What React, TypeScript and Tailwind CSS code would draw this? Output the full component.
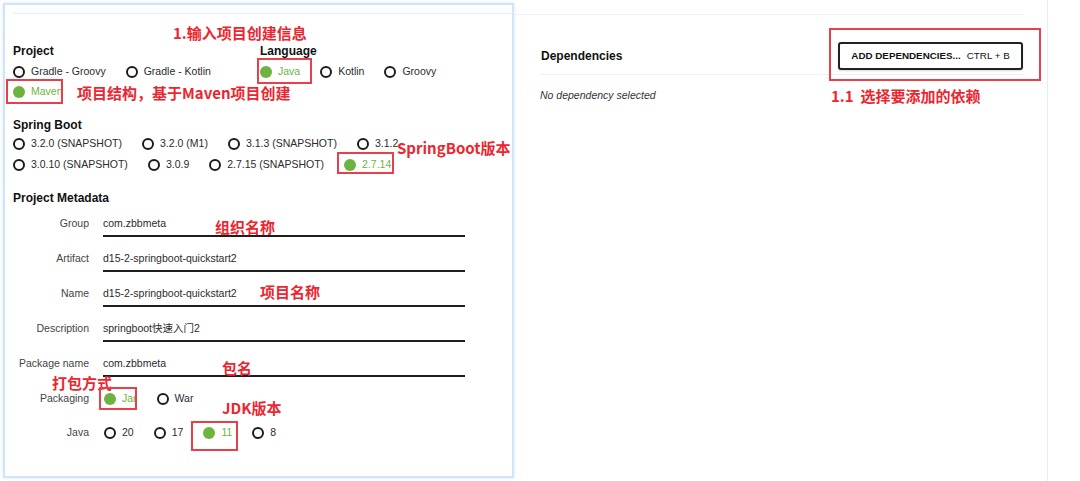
/**
 * Spring Initializr project form, annotated with red notes.
 */

const GREEN = "text-[#6db33f]";

function Radio({ label, checked = false }: { label: string; checked?: boolean }) {
  return (
    <span className="flex items-center gap-[6px]">
      {checked ? (
        <span className="shrink-0 w-[12px] h-[12px] rounded-full bg-[#6db33f]" />
      ) : (
        <span className="shrink-0 w-[12px] h-[12px] rounded-full border-2 border-[#1c1c1c]" />
      )}
      <span className={checked ? GREEN : "text-[#2b2b2b]"}>{label}</span>
    </span>
  );
}

function RadioRow({ items, selected }: { items: string[]; selected?: string }) {
  return (
    <div className="flex items-center gap-5 h-[20px]">
      {items.map((it) => (
        <Radio key={it} label={it} checked={it === selected} />
      ))}
    </div>
  );
}

function Field({ label, value }: { label: string; value: string }) {
  return (
    <div className="flex h-[35px]">
      <div className="w-[76px] text-right pt-[5px] leading-[16px] text-[#444]">{label}</div>
      <div className="ml-[14px] w-[362px] h-[27px] pt-[5px] leading-[16px] border-b-2 border-[#1e1e1e] text-[#2b2b2b]">
        {value}
      </div>
    </div>
  );
}

function Note({ text, className }: { text: string; className: string }) {
  return (
    <span
      className={`absolute leading-[20px] text-[15px] font-bold text-[#ec2630] whitespace-pre font-['Noto_Sans_CJK_SC',sans-serif] ${className}`}
    >
      {text}
    </span>
  );
}

function Box({ className }: { className: string }) {
  return <span className={`absolute border-2 border-[#e8404a] ${className}`} />;
}

export default function App() {
  return (
    <div className="relative w-[1080px] h-[481px] bg-white overflow-hidden flex text-[10.5px] font-['Liberation_Sans','Noto_Sans_CJK_SC',Arial,sans-serif]">
      {/* Left form panel */}
      <div className="ml-[3px] mt-[3px] w-[511px] h-[475px] border-2 border-[#d2e4f8] shadow-[0_0_3px_#d6e7fa] px-2 shrink-0">
        <div className="mt-[8px] -mr-2 h-px bg-[#eceff2]" />

        <div className="flex mt-[29px]">
          <div className="w-[247px]">
            <div className="h-[16px] leading-[16px] text-[12px] font-bold text-[#111]">Project</div>
            <div className="mt-[3px]">
              <RadioRow items={["Gradle - Groovy", "Gradle - Kotlin"]} />
              <RadioRow items={["Maven"]} selected="Maven" />
            </div>
          </div>
          <div>
            <div className="h-[16px] leading-[16px] text-[12px] font-bold text-[#111]">Language</div>
            <div className="mt-[3px]">
              <RadioRow items={["Java", "Kotlin", "Groovy"]} selected="Java" />
            </div>
          </div>
        </div>

        <div className="mt-[15px] h-[16px] leading-[16px] text-[12px] font-bold text-[#111]">Spring Boot</div>
        <div className="mt-px flex flex-col gap-px">
          <RadioRow items={["3.2.0 (SNAPSHOT)", "3.2.0 (M1)", "3.1.3 (SNAPSHOT)", "3.1.2"]} />
          <RadioRow items={["3.0.10 (SNAPSHOT)", "3.0.9", "2.7.15 (SNAPSHOT)", "2.7.14"]} selected="2.7.14" />
        </div>

        <div className="mt-[15px] h-[16px] leading-[16px] text-[12px] font-bold text-[#111]">Project Metadata</div>
        <div className="mt-[4px]">
          <Field label="Group" value="com.zbbmeta" />
          <Field label="Artifact" value="d15-2-springboot-quickstart2" />
          <Field label="Name" value="d15-2-springboot-quickstart2" />
          <Field label="Description" value="springboot快速入门2" />
          <Field label="Package name" value="com.zbbmeta" />
        </div>

        <div className="mt-[4px] flex items-center h-[20px]">
          <div className="w-[76px] text-right text-[#444]">Packaging</div>
          <div className="ml-[15px]">
            <RadioRow items={["Jar", "War"]} selected="Jar" />
          </div>
        </div>
        <div className="mt-[14px] flex items-center h-[20px]">
          <div className="w-[76px] text-right text-[#444]">Java</div>
          <div className="ml-[15px]">
            <RadioRow items={["20", "17", "11", "8"]} selected="11" />
          </div>
        </div>
      </div>

      {/* Right: dependencies */}
      <div className="w-[534px] shrink-0 border-r border-[#e6edf1]">
        <div className="mt-[14px] mr-[23px] h-px bg-[#edf1f4]" />
        <div className="ml-[27px] mr-[24px] mt-[27px] pb-[4px] border-b border-[#eef1f3] flex items-center justify-between">
          <span className="text-[12px] font-bold text-[#111]">Dependencies</span>
          <button className="w-[185px] h-[28px] rounded-[3px] border-2 border-[#222] bg-white shadow-[0_1px_2px_rgba(0,0,0,0.15)] flex items-center justify-center gap-[6px] text-[#111]">
            <span className="text-[9.8px] font-bold">ADD DEPENDENCIES...</span>
            <span className="text-[9.8px]">CTRL + B</span>
          </button>
        </div>
        <div className="ml-[26px] mt-[13px] italic text-[#333]">No dependency selected</div>
      </div>

      {/* Annotations */}
      <Note text="1.输入项目创建信息" className="left-[173px] top-[23px]" />
      <Note text="项目结构，基于Maven项目创建" className="left-[77px] top-[83px]" />
      <Note text="SpringBoot版本" className="left-[397px] top-[138px]" />
      <Note text="组织名称" className="left-[215px] top-[217px]" />
      <Note text="项目名称" className="left-[260px] top-[282px]" />
      <Note text="包名" className="left-[222px] top-[358px]" />
      <Note text="打包方式" className="left-[52px] top-[373px]" />
      <Note text="JDK版本" className="left-[222px] top-[398px]" />
      <Note text="1.1  选择要添加的依赖" className="left-[831px] top-[86px]" />

      <Box className="left-[6px] top-[79px] w-[57px] h-[25px]" />
      <Box className="left-[257px] top-[58px] w-[55px] h-[26px]" />
      <Box className="left-[337px] top-[152px] w-[57px] h-[22px]" />
      <Box className="left-[99px] top-[387px] w-[38px] h-[23px]" />
      <Box className="left-[191px] top-[421px] w-[47px] h-[30px]" />
      <Box className="left-[829px] top-[28px] w-[212px] h-[53px]" />
    </div>
  );
}
